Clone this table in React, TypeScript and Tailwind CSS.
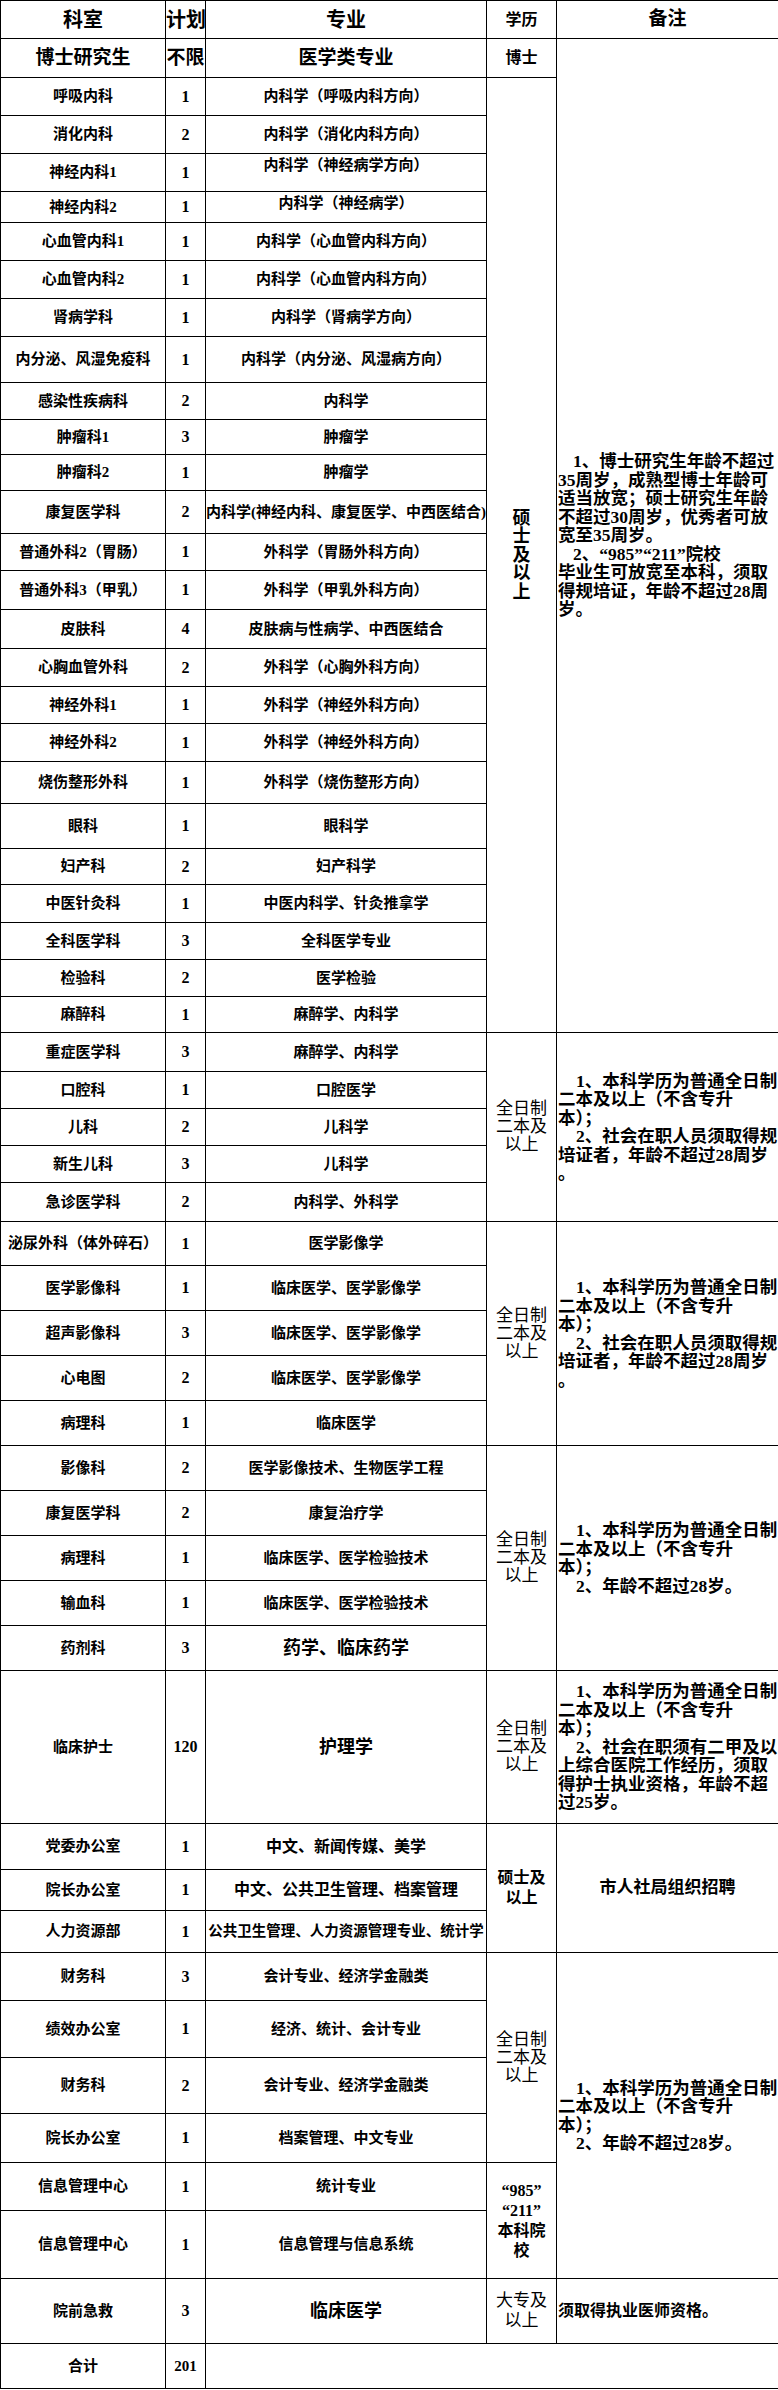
import type { ReactNode } from "react";

type Edu = { span: number; lines: string[]; cls: string };
type Remark = { span: number; node: ReactNode };
type Row = {
  d: string;
  n: string;
  m: string;
  h: string;
  mc?: string;
  top?: boolean;
  edu?: Edu;
  remark?: Remark;
};

const Note = ({ lines, indent }: { lines: [string, boolean][]; indent: string }) => (
  <div className="flex flex-col items-start text-left text-[17.5px] leading-[18.5px] font-bold pl-[1px]">
    {lines.map(([t, ind], i) => (
      <span key={i} className={ind ? indent : "whitespace-nowrap"}>
        {t}
      </span>
    ))}
  </div>
);

const noteA: [string, boolean][] = [
  ["1、博士研究生年龄不超过", true],
  ["35周岁，成熟型博士年龄可", false],
  ["适当放宽；硕士研究生年龄", false],
  ["不超过30周岁，优秀者可放", false],
  ["宽至35周岁。", false],
  ["2、“985”“211”院校", true],
  ["毕业生可放宽至本科，须取", false],
  ["得规培证，年龄不超过28周", false],
  ["岁。", false],
];

const noteB: [string, boolean][] = [
  ["1、本科学历为普通全日制", true],
  ["二本及以上（不含专升", false],
  ["本）；", false],
  ["2、社会在职人员须取得规", true],
  ["培证者，年龄不超过28周岁", false],
  ["。", false],
];

const noteC: [string, boolean][] = [
  ["1、本科学历为普通全日制", true],
  ["二本及以上（不含专升", false],
  ["本）；", false],
  ["2、年龄不超过28岁。", true],
];

const noteD: [string, boolean][] = [
  ["1、本科学历为普通全日制", true],
  ["二本及以上（不含专升", false],
  ["本）；", false],
  ["2、社会在职须有二甲及以", true],
  ["上综合医院工作经历，须取", false],
  ["得护士执业资格，年龄不超", false],
  ["过25岁。", false],
];

const ind = "whitespace-nowrap pl-[18px]";

const fullTime = ["全日制", "二本及", "以上"];
const ftCls = "text-[17px] leading-[18px] font-normal";

const rows: Row[] = [
  {
    d: "呼吸内科", n: "1", m: "内科学（呼吸内科方向）", h: "h-[38px]",
    edu: { span: 25, lines: ["硕", "士", "及", "以", "上"], cls: "text-[18px] leading-[18.5px] font-bold" },
  },
  { d: "消化内科", n: "2", m: "内科学（消化内科方向）", h: "h-[38px]" },
  { d: "神经内科1", n: "1", m: "内科学（神经病学方向）", h: "h-[38px]", top: true },
  { d: "神经内科2", n: "1", m: "内科学（神经病学）", h: "h-[31px]", top: true },
  { d: "心血管内科1", n: "1", m: "内科学（心血管内科方向）", h: "h-[38px]" },
  { d: "心血管内科2", n: "1", m: "内科学（心血管内科方向）", h: "h-[38px]" },
  { d: "肾病学科", n: "1", m: "内科学（肾病学方向）", h: "h-[38px]" },
  { d: "内分泌、风湿免疫科", n: "1", m: "内科学（内分泌、风湿病方向）", h: "h-[46px]" },
  { d: "感染性疾病科", n: "2", m: "内科学", h: "h-[37px]" },
  { d: "肿瘤科1", n: "3", m: "肿瘤学", h: "h-[35px]" },
  { d: "肿瘤科2", n: "1", m: "肿瘤学", h: "h-[36px]" },
  { d: "康复医学科", n: "2", m: "内科学(神经内科、康复医学、中西医结合)", h: "h-[43px]" },
  { d: "普通外科2（胃肠）", n: "1", m: "外科学（胃肠外科方向）", h: "h-[37px]" },
  { d: "普通外科3（甲乳）", n: "1", m: "外科学（甲乳外科方向）", h: "h-[39px]" },
  { d: "皮肤科", n: "4", m: "皮肤病与性病学、中西医结合", h: "h-[39px]" },
  { d: "心胸血管外科", n: "2", m: "外科学（心胸外科方向）", h: "h-[38px]" },
  { d: "神经外科1", n: "1", m: "外科学（神经外科方向）", h: "h-[37px]" },
  { d: "神经外科2", n: "1", m: "外科学（神经外科方向）", h: "h-[38px]" },
  { d: "烧伤整形外科", n: "1", m: "外科学（烧伤整形方向）", h: "h-[42px]" },
  { d: "眼科", n: "1", m: "眼科学", h: "h-[45px]" },
  { d: "妇产科", n: "2", m: "妇产科学", h: "h-[36px]" },
  { d: "中医针灸科", n: "1", m: "中医内科学、针灸推拿学", h: "h-[38px]" },
  { d: "全科医学科", n: "3", m: "全科医学专业", h: "h-[37px]" },
  { d: "检验科", n: "2", m: "医学检验", h: "h-[37px]" },
  { d: "麻醉科", n: "1", m: "麻醉学、内科学", h: "h-[36px]" },
  {
    d: "重症医学科", n: "3", m: "麻醉学、内科学", h: "h-[39px]",
    edu: { span: 5, lines: fullTime, cls: ftCls },
    remark: { span: 5, node: <Note lines={noteB} indent={ind} /> },
  },
  { d: "口腔科", n: "1", m: "口腔医学", h: "h-[37px]" },
  { d: "儿科", n: "2", m: "儿科学", h: "h-[37px]" },
  { d: "新生儿科", n: "3", m: "儿科学", h: "h-[37px]" },
  { d: "急诊医学科", n: "2", m: "内科学、外科学", h: "h-[39px]" },
  {
    d: "泌尿外科（体外碎石）", n: "1", m: "医学影像学", h: "h-[44px]",
    edu: { span: 5, lines: fullTime, cls: ftCls },
    remark: { span: 5, node: <Note lines={noteB} indent={ind} /> },
  },
  { d: "医学影像科", n: "1", m: "临床医学、医学影像学", h: "h-[45px]" },
  { d: "超声影像科", n: "3", m: "临床医学、医学影像学", h: "h-[45px]" },
  { d: "心电图", n: "2", m: "临床医学、医学影像学", h: "h-[45px]" },
  { d: "病理科", n: "1", m: "临床医学", h: "h-[45px]" },
  {
    d: "影像科", n: "2", m: "医学影像技术、生物医学工程", h: "h-[45px]",
    edu: { span: 5, lines: fullTime, cls: ftCls },
    remark: { span: 5, node: <Note lines={noteC} indent={ind} /> },
  },
  { d: "康复医学科", n: "2", m: "康复治疗学", h: "h-[45px]" },
  { d: "病理科", n: "1", m: "临床医学、医学检验技术", h: "h-[45px]" },
  { d: "输血科", n: "1", m: "临床医学、医学检验技术", h: "h-[45px]" },
  { d: "药剂科", n: "3", m: "药学、临床药学", h: "h-[45px]", mc: "text-[18px]" },
  {
    d: "临床护士", n: "120", m: "护理学", h: "h-[153px]", mc: "text-[18px]",
    edu: { span: 1, lines: fullTime, cls: ftCls },
    remark: { span: 1, node: <Note lines={noteD} indent={ind} /> },
  },
  {
    d: "党委办公室", n: "1", m: "中文、新闻传媒、美学", h: "h-[46px]", mc: "text-[16px]",
    edu: { span: 3, lines: ["硕士及", "以上"], cls: "text-[16px] leading-[20px] font-bold" },
    remark: {
      span: 3,
      node: <div className="text-[17px] font-bold">市人社局组织招聘</div>,
    },
  },
  { d: "院长办公室", n: "1", m: "中文、公共卫生管理、档案管理", h: "h-[41px]", mc: "text-[16px]" },
  { d: "人力资源部", n: "1", m: "公共卫生管理、人力资源管理专业、统计学", h: "h-[42px]", mc: "text-[14.5px]" },
  {
    d: "财务科", n: "3", m: "会计专业、经济学金融类", h: "h-[48px]",
    edu: { span: 4, lines: fullTime, cls: ftCls },
    remark: { span: 6, node: <Note lines={noteC} indent={ind} /> },
  },
  { d: "绩效办公室", n: "1", m: "经济、统计、会计专业", h: "h-[57px]" },
  { d: "财务科", n: "2", m: "会计专业、经济学金融类", h: "h-[56px]" },
  { d: "院长办公室", n: "1", m: "档案管理、中文专业", h: "h-[49px]" },
  {
    d: "信息管理中心", n: "1", m: "统计专业", h: "h-[48px]",
    edu: { span: 2, lines: ["“985”", "“211”", "本科院", "校"], cls: "text-[16px] leading-[20px] font-bold" },
  },
  { d: "信息管理中心", n: "1", m: "信息管理与信息系统", h: "h-[68px]" },
  {
    d: "院前急救", n: "3", m: "临床医学", h: "h-[65px]", mc: "text-[18px]",
    edu: { span: 1, lines: ["大专及", "以上"], cls: "text-[17px] leading-[20px] font-normal" },
    remark: {
      span: 1,
      node: <div className="text-left text-[16px] font-bold pl-[1px]">须取得执业医师资格。</div>,
    },
  },
];

const td = "border border-black p-0 text-center align-middle";

export default function App() {
  return (
    <div className="w-[778px] h-[2390px] bg-white text-black font-['Liberation_Serif','Noto_Sans_CJK_SC',serif]">
      <table className="table-fixed border-collapse w-[778px]">
        <colgroup>
          <col className="w-[165px]" />
          <col className="w-[40px]" />
          <col className="w-[281px]" />
          <col className="w-[70px]" />
          <col className="w-[222px]" />
        </colgroup>
        <tbody>
          <tr className="h-[38px] font-bold text-[20px]">
            <td className={td}>科室</td>
            <td className={td + " whitespace-nowrap"}>计划</td>
            <td className={td}>专业</td>
            <td className={td + " text-[16px]"}>学历</td>
            <td className={td + " text-[19px]"}>备注</td>
          </tr>
          <tr className="h-[39px] font-bold text-[19px]">
            <td className={td}>博士研究生</td>
            <td className={td + " whitespace-nowrap"}>不限</td>
            <td className={td}>医学类专业</td>
            <td className={td + " text-[16px]"}>博士</td>
            <td className={td} rowSpan={26}>
              <Note lines={noteA} indent="whitespace-nowrap pl-[15px]" />
            </td>
          </tr>
          {rows.map((r, i) => (
            <tr key={i} className={r.h + " font-bold"}>
              <td className={td + " text-[15px] whitespace-nowrap"}>{r.d}</td>
              <td className={td + " text-[16px]"}>{r.n}</td>
              <td
                className={
                  (r.top ? "border border-black p-0 text-center align-top pt-[2px] leading-[18px]" : td) +
                  " whitespace-nowrap overflow-hidden " +
                  (r.mc ?? "text-[15px]")
                }
              >
                {r.m}
              </td>
              {r.edu && (
                <td className={td} rowSpan={r.edu.span}>
                  <div className={"flex flex-col items-center " + r.edu.cls}>
                    {r.edu.lines.map((l, j) => (
                      <span key={j} className="whitespace-nowrap">
                        {l}
                      </span>
                    ))}
                  </div>
                </td>
              )}
              {r.remark && (
                <td className={td} rowSpan={r.remark.span}>
                  {r.remark.node}
                </td>
              )}
            </tr>
          ))}
          <tr className="h-[45px] font-bold">
            <td className={td + " text-[15px]"}>合计</td>
            <td className={td + " text-[15px]"}>201</td>
            <td className={td} colSpan={3}></td>
          </tr>
        </tbody>
      </table>
    </div>
  );
}
